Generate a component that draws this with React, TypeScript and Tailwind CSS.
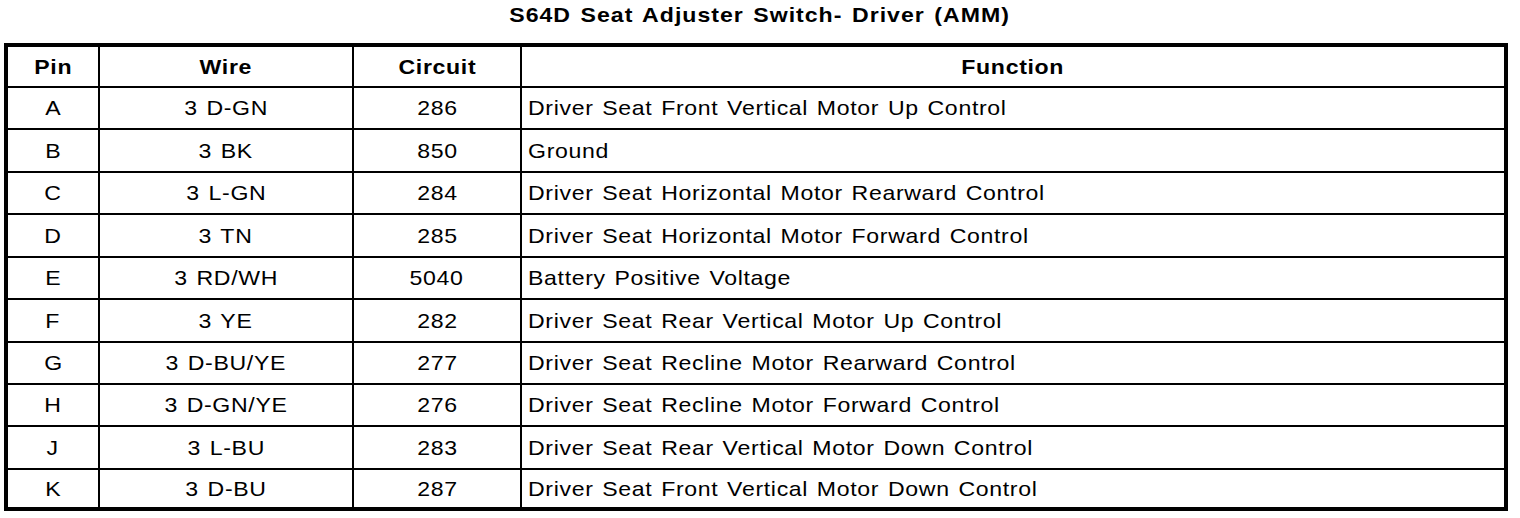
import React from 'react';

const rows = [
  ['A', '3 D-GN', '286', 'Driver Seat Front Vertical Motor Up Control'],
  ['B', '3 BK', '850', 'Ground'],
  ['C', '3 L-GN', '284', 'Driver Seat Horizontal Motor Rearward Control'],
  ['D', '3 TN', '285', 'Driver Seat Horizontal Motor Forward Control'],
  ['E', '3 RD/WH', '5040', 'Battery Positive Voltage'],
  ['F', '3 YE', '282', 'Driver Seat Rear Vertical Motor Up Control'],
  ['G', '3 D-BU/YE', '277', 'Driver Seat Recline Motor Rearward Control'],
  ['H', '3 D-GN/YE', '276', 'Driver Seat Recline Motor Forward Control'],
  ['J', '3 L-BU', '283', 'Driver Seat Rear Vertical Motor Down Control'],
  ['K', '3 D-BU', '287', 'Driver Seat Front Vertical Motor Down Control'],
];

// the printed font is a bit wider than Arial, so stretch it slightly
function Cell({ children, left, bold }: { children: React.ReactNode; left?: boolean; bold?: boolean }) {
  return (
    <div className={`bg-white flex items-center ${left ? 'justify-start pl-[6px]' : 'justify-center'}`}>
      <span
        className={`inline-block whitespace-nowrap scale-x-[1.1] ${left ? 'origin-left' : 'origin-center'} ${bold ? 'font-bold' : ''}`}
      >
        {children}
      </span>
    </div>
  );
}

export default function App() {
  return (
    <div className="w-[1520px] h-[518px] bg-white text-black font-['Liberation_Sans',Arial,sans-serif]">
      {/* title */}
      <div className="h-[43px] flex items-start justify-center pt-[2px]">
        <h1 className="inline-block text-[21px] font-bold leading-[26px] tracking-[0.9px] [word-spacing:2px] scale-x-[1.1]">
          S64D Seat Adjuster Switch- Driver (AMM)
        </h1>
      </div>

      {/* pin table */}
      <div className="ml-[4px] w-[1504px] border-4 border-black bg-black">
        <div className="grid grid-cols-[90px_252px_166px_982px] grid-rows-[39px_40px_41px_40px_41px_40px_41px_40px_40px_41px_37px] gap-[2px] text-[21px] tracking-[0.6px] [word-spacing:1.5px]">
          <Cell bold>Pin</Cell>
          <Cell bold>Wire</Cell>
          <Cell bold>Circuit</Cell>
          <Cell bold>Function</Cell>
          {rows.map((r) => (
            <React.Fragment key={r[0]}>
              <Cell>{r[0]}</Cell>
              <Cell>{r[1]}</Cell>
              <Cell>{r[2]}</Cell>
              <Cell left>{r[3]}</Cell>
            </React.Fragment>
          ))}
        </div>
      </div>
    </div>
  );
}
